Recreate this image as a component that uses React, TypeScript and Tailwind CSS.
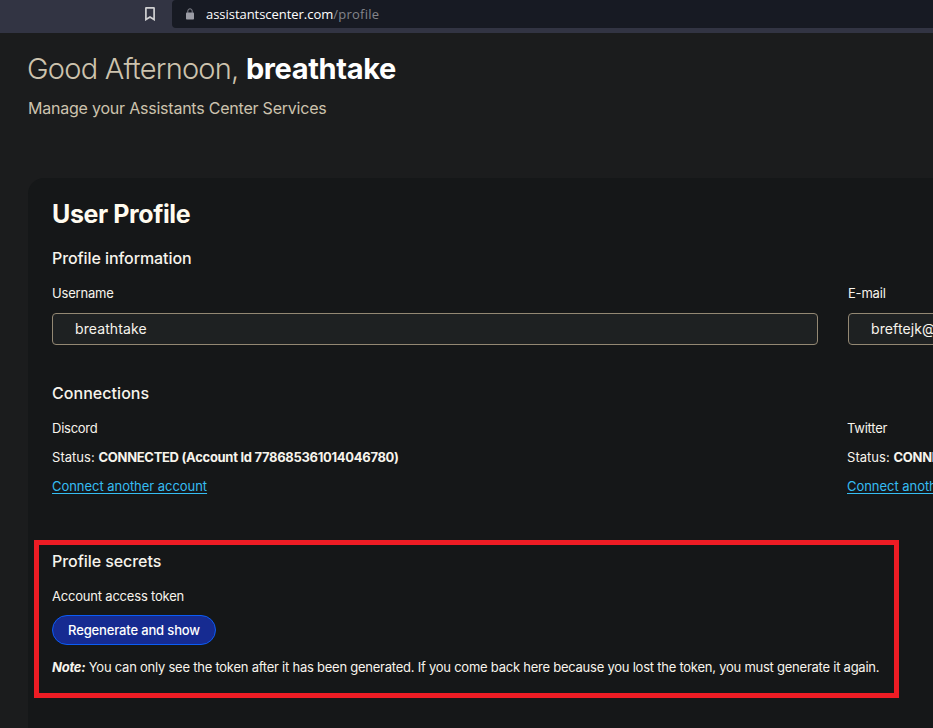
import React from "react";

function AddressBar() {
  return (
    <header className="flex h-[33px] items-start bg-[#323443]">
      <div className="flex h-7 w-[172px] justify-end pr-[17px] pt-[7px]">
        <svg width="10" height="14" viewBox="0 0 10 14" fill="none" stroke="#d0d0d2" strokeWidth="1.7">
          <path d="M0.9 1.2Q0.9 0.9 1.2 0.9H8.8Q9.1 0.9 9.1 1.2V12.6L5 10.1L0.9 12.6Z" />
        </svg>
      </div>
      <div className="flex h-7 flex-1 items-center rounded-l-[4px] bg-[#171a23] pl-[14px]">
        <svg width="8" height="12" viewBox="0 0 8 12" className="-mt-px">
          <rect x="0" y="4.5" width="8" height="7" rx="0.8" fill="#9b9ca5" />
          <path d="M1.8 5V3a2.2 2.2 0 0 1 4.4 0V5" fill="none" stroke="#858690" strokeWidth="1" />
        </svg>
        <span className="ml-3 font-['Open_Sans','Noto_Sans',sans-serif] text-[13px] leading-7 tracking-[-0.04px] text-white">
          assistantscenter.com<span className="tracking-[0.25px] text-[#83858b]">/profile</span>
        </span>
      </div>
    </header>
  );
}

function Field({ label, value }: { label: string; value: string }) {
  return (
    <div>
      <div className="h-5 text-[13px] leading-5 tracking-[-0.2px]">{label}</div>
      <div className="mt-[10px] h-8 overflow-hidden rounded-[4px] border border-[#938873] bg-[#1e2122] pl-[22px] text-[14px] leading-[30px] tracking-[0.1px]">
        {value}
      </div>
    </div>
  );
}

function Connection({ name }: { name: string }) {
  return (
    <div className="text-[13px] leading-5 tracking-[-0.25px]">
      <div>{name}</div>
      <div className="mt-[9px] whitespace-nowrap">
        <span className="tracking-[0.04px]">Status: </span>
        <b className="font-bold tracking-[-0.3px]">CONNECTED (Account Id 778685361014046780)</b>
      </div>
      <div className="mt-[9px] tracking-[-0.04px] text-[#35bdf2] underline underline-offset-2">
        Connect another account
      </div>
    </div>
  );
}

export default function App() {
  return (
    <div className="h-[728px] w-full overflow-hidden bg-[#1b1c1d] font-['Inter','Liberation_Sans',sans-serif] text-[#f7f4ec]">
      <AddressBar />
      <main className="pl-7 pt-4">
        <h1 className="-ml-px h-10 whitespace-nowrap text-[29px] font-light leading-10 tracking-[-0.77px] text-[#cdc3ae]">
          Good Afternoon, <span className="font-bold tracking-[-0.35px] text-white">breathtake</span>
        </h1>
        <p className="mt-[7px] h-6 text-[16px] leading-6 tracking-[-0.22px] text-[#cdc3ae]">
          Manage your Assistants Center Services
        </p>
        <section className="mt-[58px] h-[600px] w-[1610px] rounded-2xl bg-[#151718] pl-6 pt-5">
          <h2 className="h-8 text-[25px] font-bold leading-8 tracking-[-0.4px] text-[#fffbef]">User Profile</h2>
          <h3 className="mt-4 h-6 text-[16px] font-medium leading-6 tracking-[-0.08px]">Profile information</h3>
          <div className="mt-[13px] grid grid-cols-[766px_766px] gap-x-[30px]">
            <Field label="Username" value="breathtake" />
            <Field label="E-mail" value="breftejk@gmail.com" />
          </div>
          <h3 className="mt-9 h-6 text-[16px] font-medium leading-6 tracking-[0.05px]">Connections</h3>
          <div className="mt-[13px] grid grid-cols-[766px_766px] gap-x-[29px]">
            <Connection name="Discord" />
            <Connection name="Twitter" />
          </div>
          <div className="-ml-[18px] mt-11 h-[158px] w-[865px] border-[5px] border-[#ed1c24] pl-[13px] pt-1">
            <h3 className="h-6 text-[16px] font-medium leading-6 tracking-[-0.06px]">Profile secrets</h3>
            <div className="mt-[13px] text-[13px] leading-5 tracking-[-0.2px]">Account access token</div>
            <button className="mt-[9px] block h-[30px] w-[164px] whitespace-nowrap rounded-full border border-[#0b5cf5] bg-[#162b91] text-center text-[13px] font-medium leading-7 tracking-[-0.15px] text-white">
              Regenerate and show
            </button>
            <p className="mt-3 whitespace-nowrap text-[13px] leading-5 tracking-[-0.24px]">
              <b className="font-bold italic">Note:</b>{" "}
              <span>
                You can only see the token after it has been generated. If you come back here because you lost the token, you must generate it again.
              </span>
            </p>
          </div>
        </section>
      </main>
    </div>
  );
}
